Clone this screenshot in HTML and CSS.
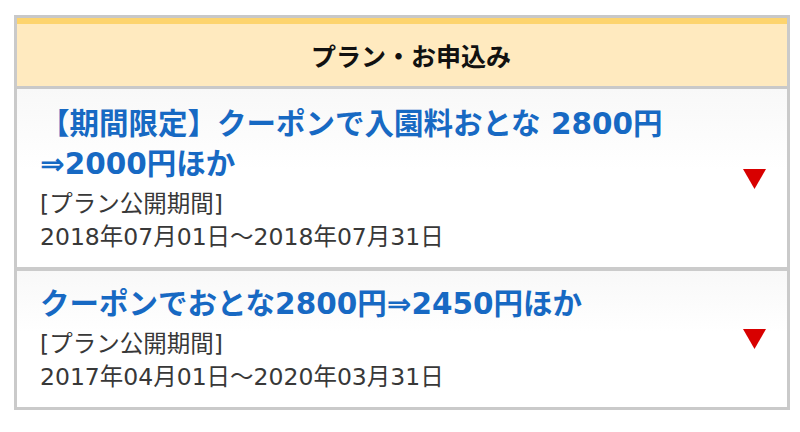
FILE: index.html
```html
<!DOCTYPE html>
<html lang="ja">
<head>
    <meta charset="UTF-8">
    <title>プラン・お申込み</title>
    <link rel="stylesheet" href="styles.css">
</head>
<body>
<div class="plan">
    <h2 class="plan-head">プラン・お申込み</h2>

    <a class="plan-item" href="javascript:;">
        <div class="plan-body">
            <p class="plan-title">【期間限定】クーポンで入園料おとな 2800円⇒2000円ほか</p>
            <p class="plan-meta">[プラン公開期間]<br>2018年07月01日〜2018年07月31日</p>
        </div>
        <svg class="plan-arrow" width="23" height="20" viewBox="0 0 23 20">
            <polygon points="0,0 23,0 11.5,20" fill="#d80000"/>
        </svg>
    </a>

    <a class="plan-item" href="javascript:;">
        <div class="plan-body">
            <p class="plan-title">クーポンでおとな2800円⇒2450円ほか</p>
            <p class="plan-meta">[プラン公開期間]<br>2017年04月01日〜2020年03月31日</p>
        </div>
        <svg class="plan-arrow" width="23" height="20" viewBox="0 0 23 20">
            <polygon points="0,0 23,0 11.5,20" fill="#d80000"/>
        </svg>
    </a>
</div>
</body>
</html>
```

FILE: styles.css
```css
*{
    margin: 0;
    padding: 0;
    box-sizing: border-box;
}

body{
    background-color: #fff;
    font-family: "DejaVu Sans", "Noto Sans CJK JP", sans-serif;
}

.plan{
    width: 776px;
    margin: 15px 0 0 14px;

    border: 3px solid #cacaca;
    border-top-color: #c8c8c8;
}

.plan-head{
    height: 71px;
    padding-left: 18px;

    border-top: 6px solid #fdd46e;
    border-bottom: 3px solid #c9c9c9;
    background-color: #ffeabf;

    display: flex;
    align-items: center;
    justify-content: center;

    font-size: 25px;
    font-weight: bold;
    color: #111;
}

.plan-item{
    display: flex;
    align-items: center;
    gap: 20px;

    padding: 12px 21px 13px 23px;

    background: linear-gradient(#f8f8f8, #fff 45%);
    text-decoration: none;
}

.plan-item:first-of-type{
    padding-top: 15px;
}

.plan-item + .plan-item{
    border-top: 4px solid #cbcbcb;
    padding-top: 13px;
}

.plan-body{
    flex: 1;
}

.plan-title{
    font-size: 29.5px;
    line-height: 40px;
    font-weight: bold;
    color: #1769c3;

    margin-bottom: 4px;
}

.plan-meta{
    font-size: 23.5px;
    line-height: 33px;
    color: #383838;
}

.plan-arrow{
    flex: none;
    display: block;
}
```
